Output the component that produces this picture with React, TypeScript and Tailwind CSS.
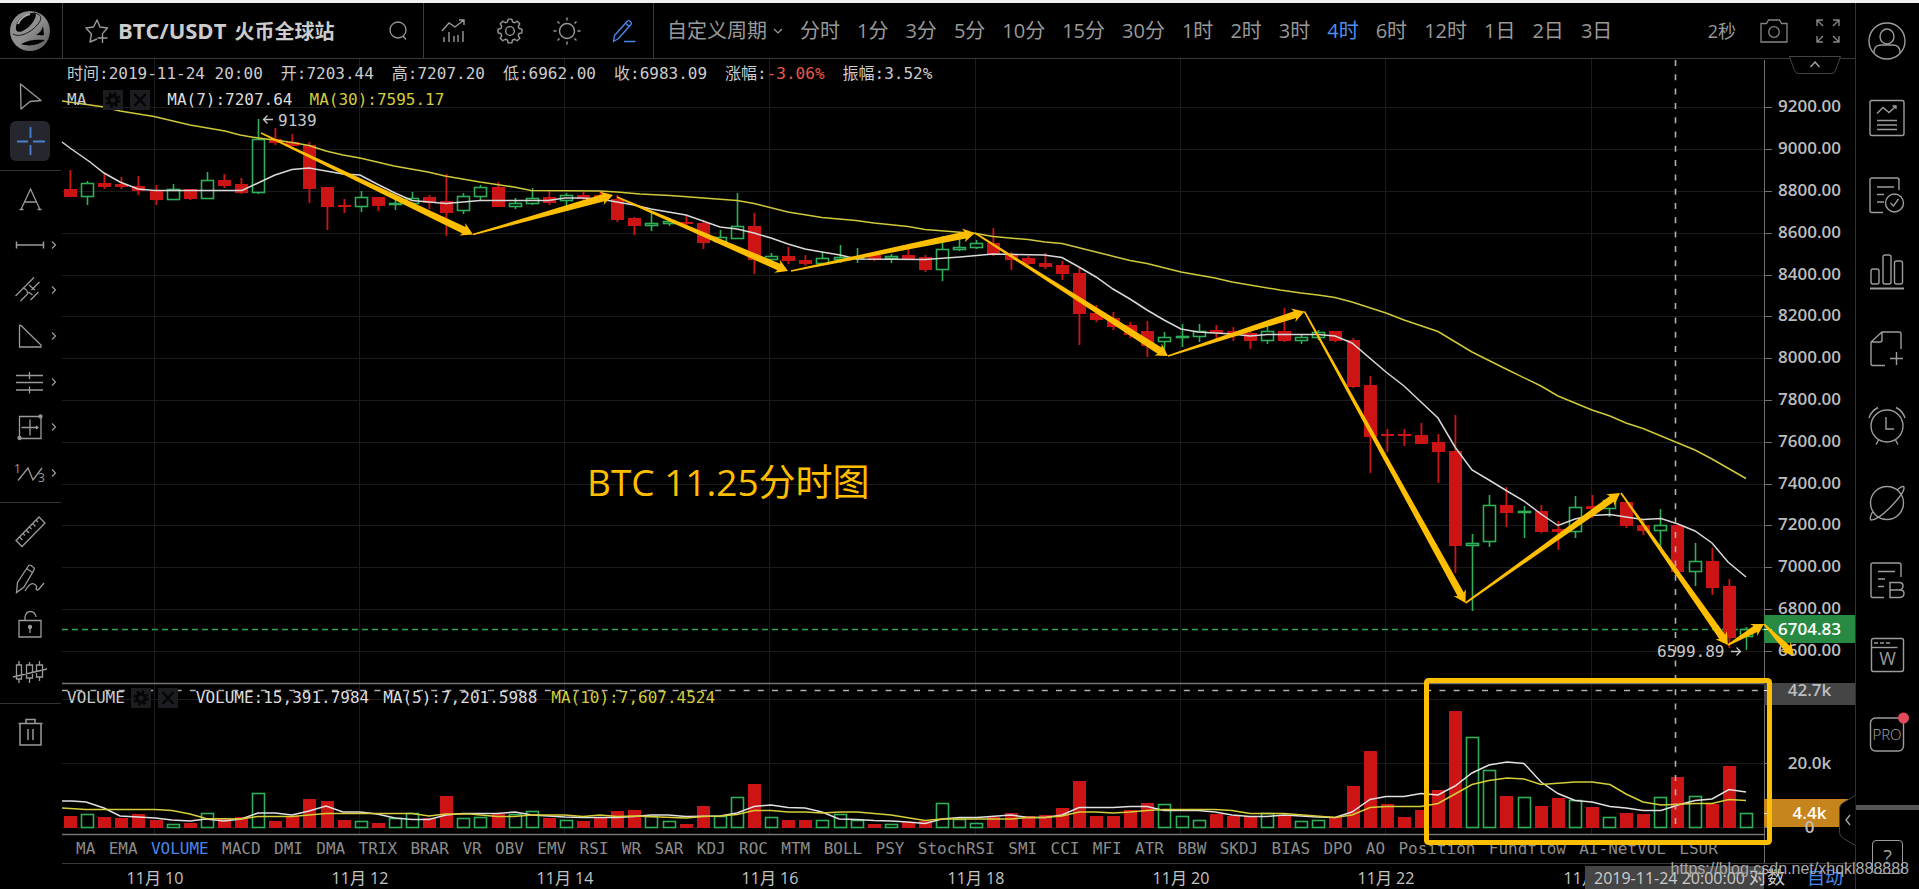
import type { ReactNode } from 'react'

const SANS = "font-['Open_Sans','Noto_Sans_CJK_SC',sans-serif]"
const MONO = "font-['DejaVu_Sans_Mono','Noto_Sans_CJK_SC',monospace]"

/* Plot geometry: first candle centre, spacing between candles, foot of the volume bars. */
const FIRST_X = 70
const STEP = 17.1
const VOLUME_BASE = 828

type Candle = [string, number, number, number, number, number]

/* direction, body top, body bottom, wick top, wick bottom, volume top */
const candles: Candle[] = [
  ['r', 189, 197, 170, 197, 816], ['g', 183, 197, 181, 205, 814], ['r', 183, 187, 174, 189, 817],
  ['r', 184, 187, 177, 189, 818], ['r', 186, 191, 176, 195, 814], ['r', 191, 200, 185, 205, 820],
  ['g', 189, 200, 184, 200, 824], ['r', 189, 199, 189, 200, 823], ['g', 180, 199, 172, 199, 813],
  ['r', 180, 186, 174, 188, 819], ['r', 184, 193, 178, 194, 817], ['g', 139, 193, 119, 194, 793],
  ['r', 139, 143, 128, 145, 821], ['r', 142, 146, 134, 146, 816], ['r', 145, 189, 142, 203, 799],
  ['r', 187, 207, 187, 230, 801], ['r', 205, 207, 199, 213, 820], ['g', 197, 207, 191, 212, 821],
  ['r', 197, 206, 197, 211, 823], ['g', 203, 205, 198, 210, 818], ['g', 198, 204, 192, 205, 813],
  ['r', 197, 203, 195, 209, 818], ['r', 201, 213, 174, 236, 796], ['g', 196, 211, 193, 214, 818],
  ['g', 187, 197, 185, 201, 817], ['r', 187, 207, 182, 207, 814], ['g', 203, 207, 198, 209, 814],
  ['g', 198, 204, 188, 205, 811], ['r', 197, 203, 191, 205, 818], ['g', 195, 201, 193, 206, 820],
  ['r', 195, 199, 192, 200, 821], ['r', 195, 200, 191, 201, 817], ['r', 199, 220, 195, 222, 811],
  ['r', 218, 226, 217, 235, 810], ['g', 223, 226, 211, 231, 816], ['g', 221, 224, 219, 226, 821],
  ['r', 222, 224, 215, 225, 824], ['r', 223, 243, 220, 249, 806], ['g', 237, 242, 230, 243, 816],
  ['g', 226, 239, 193, 239, 797], ['r', 226, 260, 213, 274, 784], ['g', 256, 260, 253, 262, 817],
  ['r', 256, 261, 247, 264, 820], ['r', 260, 264, 255, 266, 820], ['g', 258, 264, 252, 265, 820],
  ['g', 257, 260, 245, 263, 814], ['g', 257, 259, 248, 263, 820], ['r', 255, 260, 253, 261, 824],
  ['g', 256, 259, 254, 263, 824], ['r', 255, 259, 248, 260, 822], ['r', 257, 270, 255, 272, 821],
  ['g', 249, 270, 236, 281, 803], ['g', 247, 250, 238, 251, 819], ['g', 243, 248, 240, 249, 823],
  ['r', 243, 254, 228, 256, 817], ['r', 254, 260, 252, 270, 813], ['r', 258, 264, 256, 265, 816],
  ['r', 263, 267, 253, 269, 815], ['r', 265, 274, 261, 280, 808], ['r', 273, 314, 268, 345, 781],
  ['r', 313, 320, 305, 322, 816], ['r', 318, 327, 312, 330, 816], ['r', 325, 335, 322, 338, 810],
  ['r', 331, 346, 321, 357, 803], ['g', 337, 342, 332, 355, 804], ['g', 336, 338, 324, 347, 816],
  ['g', 331, 337, 324, 342, 820], ['r', 330, 333, 325, 339, 814], ['r', 331, 334, 327, 341, 816],
  ['r', 333, 341, 329, 349, 816], ['g', 331, 341, 323, 344, 813], ['r', 331, 341, 308, 342, 815],
  ['g', 337, 341, 334, 344, 821], ['g', 332, 338, 330, 340, 820], ['r', 331, 341, 331, 342, 817],
  ['r', 340, 387, 338, 388, 786], ['r', 385, 437, 376, 473, 751], ['r', 434, 436, 429, 452, 804],
  ['r', 434, 436, 429, 446, 817], ['r', 435, 444, 423, 444, 810], ['r', 442, 452, 434, 483, 790],
  ['r', 451, 546, 415, 573, 711], ['g', 543, 546, 534, 611, 737], ['g', 505, 542, 495, 547, 770],
  ['r', 505, 513, 487, 527, 796], ['g', 511, 513, 506, 538, 797], ['r', 511, 532, 505, 533, 806],
  ['r', 529, 532, 521, 550, 798], ['g', 507, 532, 496, 538, 800], ['r', 506, 509, 495, 518, 807],
  ['g', 500, 509, 497, 517, 817], ['r', 502, 526, 502, 528, 813], ['r', 525, 531, 520, 535, 814],
  ['g', 525, 531, 509, 547, 797], ['r', 525, 572, 525, 575, 777], ['g', 561, 572, 543, 586, 796],
  ['r', 561, 588, 548, 595, 804], ['r', 586, 638, 579, 648, 766], ['g', 629, 637, 627, 650, 813],
]

const MA7 =
  '62,142 70,148 90,162 104,173 120,182 138,189 155,190.5 242,190.5 258,183 275,175 292,169.5 309,168 326,171 343,174 360,175 377,184 395,193 412,200.5 429,202 446,203.5 463,202 480,200.5 548,200.5 565,198 582,198 600,199 617,202 634,205 651,209 686,215 703,221 720,227 737,229 754,233 771,238 788,244 805,249 822,252 840,255 857,259 925,259.5 960,257 993,254 1044,255 1062,257.5 1079,267 1096,277 1113,289 1130,299 1147,310 1164,320 1181,329 1198,332 1232,334 1250,336 1267,334.5 1318,334.5 1335,336 1352,343 1386,372 1404,386 1421,402 1438,418 1455,447 1472,470 1489,480 1507,491 1524,501 1541,514 1558,525.5 1575,519 1592,515.5 1610,514.5 1626,517 1643,519.5 1661,518.5 1678,524 1695,531 1712,543 1728,562 1746,577'
const MA30 =
  '62,101 104,107 120,111 154,116.5 190,125 225,131 240,135 258,138 275,140 292,142.5 309,145.5 326,151 343,155 360,158 394,166 428,172 445,176 480,182 514,187 531,190.5 600,191 617,192 640,194 670,195.5 737,200.5 754,203.5 788,212 822,217.5 856,220.5 874,223 908,226.5 925,229.5 976,233.5 993,236.5 1028,239.5 1045,242 1062,243.5 1096,252 1130,260.5 1147,263.5 1181,272 1215,278 1232,282 1280,290 1301,293 1318,295 1335,297.5 1352,302 1386,313 1404,320 1438,331.5 1472,352 1506,369 1541,386 1558,396 1592,410 1610,416 1626,423 1643,428.5 1678,443 1695,450 1712,459 1746,478.5'
const VOL_MA5 =
  '62,801 72,801 86,802 104,808 120,816 138,817 155,818 172,820 190,821 206,819 224,821 241,819 258,813 275,813 292,815 309,811 326,806 343,812 360,812 377,814 395,818 412,819.5 429,819.5 446,815 463,813.5 497,813.5 515,812 532,815 565,817 583,817.5 617,817.5 634,816.5 651,815 668,815 686,816.5 720,816 737,813 754,806.5 771,805 788,807.5 805,808 822,812 839,819 856,819.5 874,820.5 891,821 908,822 925,823.5 942,819 960,817.5 977,817.5 1011,815 1028,817.5 1045,817.5 1062,815 1079,807.5 1113,807.5 1130,806.5 1147,806.5 1164,810.5 1198,810.5 1215,812 1232,815 1250,816.5 1267,816.5 1284,815 1301,816 1318,817 1335,817.5 1352,812 1370,799.5 1386,796.5 1404,796.5 1421,793.5 1438,795 1455,786 1472,773 1489,765 1507,762 1524,763.5 1541,782 1558,793.5 1575,800.5 1592,802 1610,806.5 1626,808 1643,810.5 1661,810.5 1678,805 1695,800.5 1712,799 1729,789.5 1746,792'
const VOL_MA10 =
  '62,808 86,809.5 155,809.5 172,810.5 190,814 206,818.5 241,819 258,816.5 292,816.5 309,815 326,813.5 412,813.5 429,816 446,814 470,814 497,816.5 514,816.5 531,815 565,815 583,816.5 600,815 617,816.5 634,816 686,818 703,816.5 720,816 737,814.5 754,810.5 771,810.5 788,812 805,812 822,813 840,812 857,812 891,815 925,820.5 942,819 1011,819 1028,817.5 1045,817.5 1062,816 1079,812 1096,812 1113,813 1130,812 1147,810.5 1164,809.5 1215,809.5 1232,810.5 1250,813.5 1284,813.5 1335,817.5 1352,815 1370,807.5 1386,806.5 1421,806.5 1438,803.5 1455,794 1472,784.5 1489,780.5 1507,778 1524,779 1541,784.5 1575,782 1592,782 1610,784.5 1626,794 1643,802 1661,805 1695,803.5 1712,803.5 1729,799.5 1746,800.5'

const priceTicks: [string, number][] = [
  ['9200.00', 107], ['9000.00', 149], ['8800.00', 191], ['8600.00', 233], ['8400.00', 275],
  ['8200.00', 316], ['8000.00', 358], ['7800.00', 400], ['7600.00', 442], ['7400.00', 484],
  ['7200.00', 525], ['7000.00', 567], ['6800.00', 609], ['6600.00', 651],
]

const dayTicks: [string, number][] = [
  ['11月 10', 154], ['11月 12', 359], ['11月 14', 564], ['11月 16', 769],
  ['11月 18', 975], ['11月 20', 1180], ['11月 22', 1385], ['11月 24', 1591],
]

const arrows: [number, number, number, number][] = [
  [261, 133, 473, 234.5], [473, 234.5, 613, 195], [617, 197, 788, 271], [791, 271, 975, 233],
  [975, 233, 1168, 356], [1168, 356, 1304.5, 311.5], [1304.5, 311.5, 1465.5, 603],
  [1465.5, 603, 1620, 493], [1621, 493, 1728, 645], [1728, 645, 1764, 624], [1764, 624, 1794, 655.5],
]

function taperedArrow([x1, y1, x2, y2]: [number, number, number, number]) {
  const length = Math.hypot(x2 - x1, y2 - y1)
  const ux = (x2 - x1) / length
  const uy = (y2 - y1) / length
  const at = (along: number, across: number) =>
    `${(x1 + ux * along - uy * across).toFixed(1)},${(y1 + uy * along + ux * across).toFixed(1)}`
  const neck = length - 10
  return [
    at(0, -0.8), at(neck, -3.6), at(neck - 2, -7), at(length, 0),
    at(neck - 2, 7), at(neck, 3.6), at(0, 0.8),
  ].join(' ')
}

function CandleShape({ candle, index }: { candle: Candle; index: number }) {
  const [dir, top, bottom, high, low, vol] = candle
  const x = Math.round(FIRST_X + STEP * index)
  const left = x - 6
  if (dir === 'r') {
    return (
      <g fill="#cc1414">
        <rect x={x - 0.5} y={high} width="1.8" height={low - high} />
        <rect x={left} y={top} width="13" height={bottom - top} />
        <rect x={left} y={vol} width="13" height={VOLUME_BASE - vol} />
      </g>
    )
  }
  return (
    <g fill="none" stroke="#2fb058" strokeWidth="1.6">
      <path d={`M${x + 0.5} ${high}V${top}M${x + 0.5} ${bottom}V${low}`} />
      <rect x={left + 0.5} y={top + 0.5} width="12" height={bottom - top - 1} />
      <rect x={left + 0.5} y={vol + 0.5} width="12" height={VOLUME_BASE - vol - 1} />
    </g>
  )
}

function Plot() {
  return (
    <svg viewBox="62 59 1793 776" className={`block w-full overflow-visible ${SANS}`}>
      <g stroke="#1b1b1b">
        {priceTicks.map(([label, y]) => (
          <line key={label} x1="62" x2="1764" y1={y + 0.5} y2={y + 0.5} />
        ))}
        {dayTicks.map(([label, x]) => (
          <line key={label} x1={x + 0.5} x2={x + 0.5} y1="59" y2="834" />
        ))}
        <path d="M62 699.5H1764M62 763.5H1764M62 827.5H1764" />
      </g>
      <line x1="62" x2="1764" y1="629.5" y2="629.5" stroke="#2fa553" strokeWidth="1.4" strokeDasharray="6 4" />
      {candles.map((candle, i) => (
        <CandleShape key={i} candle={candle} index={i} />
      ))}
      <g fill="none" strokeWidth="1.5">
        <polyline points={MA7} stroke="#d8d8d8" />
        <polyline points={MA30} stroke="#cfc93a" />
        <polyline points={VOL_MA5} stroke="#e0e0e0" />
        <polyline points={VOL_MA10} stroke="#d6cd3a" />
      </g>
      <g stroke="#b0b0b0" strokeWidth="1.6">
        <line x1="1675.5" x2="1675.5" y1="60" y2="830" strokeDasharray="6 8.3" />
        <line x1="62" x2="1764" y1="690.5" y2="690.5" strokeDasharray="6 8.2" />
      </g>
      <path d="M62 683.5H1764M62 834.5H1764" stroke="#757575" strokeWidth="1.5" />
      <path d="M1764.5 60V835" stroke="#707070" />

      <g fontSize="16" fill="#c8c8c8" stroke="none" className={MONO}>
        <path d="M264 119.5h9M267.500 115.500l-4 4 4 4M1731 651.500h9M1736.500 647.500l4 4-4 4" fill="none" stroke="#c8c8c8" strokeWidth="1.3" />
        <text x="278" y="126">9139</text>
        <text x="1657" y="657">6599.89</text>
      </g>

      <g stroke="#707070">
        {priceTicks.map(([label, y]) => (
          <line key={label} x1="1764" x2="1772" y1={y + 0.5} y2={y + 0.5} />
        ))}
        <path d="M1764 763.5h8M1764 827.5h8" />
      </g>
      <rect x="1764" y="615" width="91" height="28" fill="#288a42" />
      <rect x="1764" y="683" width="91" height="22" fill="#454545" />
      <rect x="1764" y="799" width="91" height="28" fill="#c6851c" />
      <path d="M1764 629.500h8M1764 690.500h8M1764 813.500h8" stroke="#eee" />
      <g fontSize="17" fontWeight="600" fill="#bdbdbd" textAnchor="middle">
        {priceTicks.map(([label, y]) => (
          <text key={label} x="1809.500" y={y + 5}>{label}</text>
        ))}
        <text x="1809.500" y="696">42.7k</text>
        <text x="1809.500" y="769">20.0k</text>
        <text x="1809.500" y="833">0</text>
        <g fill="#fff">
          <text x="1809.500" y="635">6704.83</text>
          <text x="1809.500" y="819">4.4k</text>
        </g>
      </g>

      <g fill="#ffbe00">
        {arrows.map((arrow, i) => (
          <polygon key={i} points={taperedArrow(arrow)} />
        ))}
        <text x="587" y="496" fontSize="37">BTC 11.25分时图</text>
      </g>
      <rect x="1426.500" y="680.500" width="343" height="162" rx="2" fill="none" stroke="#ffbe00" strokeWidth="5" />
      <path d="M1855.500 795.500l-12 7q-4 2-4 6v24q0 4 4 6l12 7" fill="#000" stroke="#444" />
      <path d="M1850 815l-4 5 4 5" fill="none" stroke="#aaa" strokeWidth="1.3" />
    </svg>
  )
}

function LegendButtons() {
  return (
    <span className="flex gap-[7px]">
      <button aria-label="Settings" className="flex size-5 items-center justify-center bg-[#1c1d20]">
        <svg viewBox="0 0 16 16" className="size-4" fill="none" stroke="#050505">
          <circle cx="8" cy="8" r="4" strokeWidth="3" />
          <circle cx="8" cy="8" r="6.500" strokeWidth="2.500" strokeDasharray="2.600 2.500" />
        </svg>
      </button>
      <button aria-label="Close" className="flex size-5 items-center justify-center bg-[#1c1d20]">
        <svg viewBox="0 0 16 16" className="size-4" stroke="#050505" strokeWidth="2.500">
          <path d="M2.500 2l11 12M13.500 2l-11 12" />
        </svg>
      </button>
    </span>
  )
}

function Tool({ label, more, active, children }: { label: string; more?: boolean; active?: boolean; children: ReactNode }) {
  return (
    <button aria-label={label} className="flex w-full flex-1 items-center pl-[10px]">
      <svg
        viewBox="0 0 40 40"
        className={active ? 'size-10 rounded-md bg-[#26262e]' : 'size-10'}
        fill="none"
        stroke={active ? '#4a80d0' : '#9a9a9a'}
        strokeWidth="1.300"
      >
        {children}
      </svg>
      {more && (
        <svg viewBox="0 0 6 10" className="ml-px h-[10px] w-[6px]" fill="none" stroke="#9a9a9a" strokeWidth="1.200">
          <path d="M1 1.500L4.500 5 1 8.500" />
        </svg>
      )}
    </button>
  )
}

function LeftToolbar() {
  return (
    <aside className="flex w-[62px] shrink-0 flex-col pr-px">
      <div className="flex h-[112px] flex-col border-b border-[#333] pt-[14px] pb-[6px]">
        <Tool label="Cursor"><path d="M10.500 8L31 24.500 20 25.500 11 33z" strokeLinejoin="round" /></Tool>
        <Tool label="Crosshair" active><path d="M20.500 6v11M20.500 24v10M7 20.500h11M23 20.500h12" strokeWidth="1.800" /></Tool>
      </div>
      <div className="flex h-[332px] flex-col border-b border-[#333] pt-[5px] pb-[6px]">
        <Tool label="Text"><path d="M11 30.500L20.500 10 30 30.500M14 23h13M9.500 30.500h4M27.500 30.500h4" /></Tool>
        <Tool label="Line" more><path d="M6.500 16.500v7M33.500 16.500v7M6.500 20h27" strokeWidth="1.500" /></Tool>
        <Tool label="Channel" more>
          <path d="M5.500 26L24 7.500M10.500 31l7-7M21.500 20l8-8M20.500 30l8-8M13 17.500l4 3M18.500 22l4 3M17 21l1 3M19 15l6 5" />
        </Tool>
        <Tool label="Shape" more><path d="M9.500 9.500v21.500h21.500v-2L11 9.500z" /></Tool>
        <Tool label="Fibonacci" more><path d="M6 13.500h27M6 20.500h27M6 28h27M19.500 10v7M19.500 24.500v7" /></Tool>
        <Tool label="Range" more>
          <path d="M9.500 9.500h21.500v22h-21.500zM20 12.500v16M11.500 20.500h16M26 19l2 1.500-2 1.500" />
          <circle cx="30.500" cy="9.500" r="1.500" />
          <circle cx="9.500" cy="31" r="1.500" />
        </Tool>
        <Tool label="Wave" more>
          <path d="M8 27.500L18 15l5 12L32 15" />
          <g fill="#9a9a9a" stroke="none" fontSize="12" className={SANS}>
            <text x="4" y="20">1</text>
            <text x="28" y="29">3</text>
          </g>
        </Tool>
      </div>
      <div className="flex h-[201px] flex-col border-b border-[#333] pt-[5px] pb-[6px]">
        <Tool label="Ruler">
          <path d="M6 28.500L29 5l6 6L12 34.500zM9.500 25l3 3M13 21.500l2 2M16 18l3 3M19.500 15l2 2M22.500 11.500l3 3M26 8l2 2" />
        </Tool>
        <Tool label="Pencil">
          <path d="M6.500 33.500l1-10L18 7.500q1-2 3-1l2 1.500q2 1 1 3L14 28zM16.500 9.500l6 4M15 32q5-9 9-7t2 5q1 2 3 0l5-6" />
        </Tool>
        <Tool label="Lock">
          <path d="M9 14.500h22V31H9zM15 14v-3q1-5.500 5.500-5.500T26 11" />
          <circle cx="20" cy="21" r="1.500" fill="#9a9a9a" />
          <path d="M20 21v6" />
        </Tool>
        <Tool label="Hide drawings">
          <path d="M6.500 12h5v14h-5zM16.500 12h6v13h-6zM26.500 12h6v12h-6zM9 8v4M9 26v4M19.500 9v3M19.500 25v5M29.500 8v4M29.500 24v4M3 24l34-8" />
        </Tool>
      </div>
      <div className="flex h-[56px] flex-col">
        <Tool label="Delete"><path d="M10 11.500h21V33H10zM8.500 11.500h24M16 11V7.500h9V11M18 17v11M23 17v11" strokeWidth="1.500" /></Tool>
      </div>
    </aside>
  )
}

function SideItem({ label, children }: { label: string; children: ReactNode }) {
  return (
    <button aria-label={label} className="flex h-[77px] w-full items-center justify-center pr-[2px] pb-[2px]">
      <svg viewBox="0 0 40 40" className="size-10 overflow-visible" fill="none" stroke="#9c9c9c" strokeWidth="1.400">
        {children}
      </svg>
    </button>
  )
}

function RightSidebar() {
  return (
    <aside className="flex w-16 shrink-0 flex-col overflow-hidden border-l border-[#333]">
      <SideItem label="Account">
        <circle cx="20" cy="20" r="18" />
        <ellipse cx="20" cy="15.500" rx="7" ry="7.500" />
        <path d="M7 32v-2q1-6 7-6h12q6 0 7 6v2" />
      </SideItem>
      <SideItem label="Market report">
        <rect x="3" y="2.500" width="34" height="35" rx="2" />
        <path d="M10 15.500l6-6 6 5 7-6.500M25.500 8H29v3M10 22.500h20M10 27h20M10 31.500h20" />
      </SideItem>
      <SideItem label="Orders">
        <path d="M16 37.500H5q-2 0-2-2V5q0-2 2-2h25q2 0 2 2v10M10 12h17M10 19.500h7M10 27h7" />
        <circle cx="27.500" cy="28" r="9" />
        <path d="M23.500 28l3 3 5-7" />
      </SideItem>
      <SideItem label="Statistics">
        <rect x="4" y="17" width="8" height="15" rx="2" />
        <rect x="16" y="3" width="8" height="29" rx="2" />
        <rect x="27.500" y="9" width="8" height="23" rx="2" />
        <path d="M3 36.500h34" strokeWidth="1.800" />
      </SideItem>
      <SideItem label="New note">
        <path d="M18 36.500H6q-2 0-2-2V13L15 3h17q2 0 2 2v15M4 13h9q2 0 2-2V3M29.500 23v13M23 29.500h13" />
      </SideItem>
      <SideItem label="Alerts">
        <circle cx="20" cy="20" r="16" />
        <path d="M19 11v12h8M2 12q2-7 9-10.500M38 12q-2-7-9-10.500M11.500 34L9 38.500M28.500 34l2.500 4.500" />
      </SideItem>
      <SideItem label="Discover">
        <circle cx="20" cy="20" r="16.500" />
        <path d="M30 7q7-6 7-2 0 5-13 18.500T4 37q-2-1 1.500-8" />
      </SideItem>
      <SideItem label="Backtest">
        <path d="M17 37.500H6q-2 0-2-2V5q0-2 2-2h26q2 0 2 2v12M11 11.500h17M11 19h7M11 26.500h6M23 22.500h9q4 0 4 3.500t-4 4h-9zM23 30h10q4 0 4 3.500t-4 4H23z" />
      </SideItem>
      <SideItem label="Workspace">
        <rect x="4.500" y="1.500" width="32" height="33" rx="2" />
        <path d="M4.500 10.500h26" />
        <path d="M7 6h16" strokeDasharray="4 2" />
        <text x="20.500" y="28" textAnchor="middle" fontSize="18" fill="#9c9c9c" stroke="none" className={SANS}>W</text>
      </SideItem>
      <SideItem label="Pro">
        <rect x="3.500" y="4" width="33" height="33" rx="5" />
        <text x="20" y="26" textAnchor="middle" fontSize="15" fontWeight="300" fill="#a8a8a8" stroke="none" className={SANS}>PRO</text>
        <circle cx="36.500" cy="4" r="5.500" fill="#e04a5a" stroke="none" />
      </SideItem>
      <div className="mt-8 h-[5px] shrink-0 bg-[#555]" />
      <button aria-label="Help" className="mx-auto mt-[30px] h-[34px] w-[31px] rounded-sm border border-[#9c9c9c] text-xl text-[#9c9c9c]">
        ?
      </button>
    </aside>
  )
}

const periods = ['分时', '1分', '3分', '5分', '10分', '15分', '30分', '1时', '2时', '3时', '4时', '6时', '12时', '1日', '2日', '3日']

const iconButton = 'flex flex-1 items-center justify-center'

function Header() {
  return (
    <header className="flex h-14 border-b border-[#3a3a3a] text-[#999]">
      <a href="#home" aria-label="Home" className="flex w-[62px] shrink-0 items-center justify-center pr-[2px]">
        <svg viewBox="0 0 40 42" className="h-[42px] w-10">
          <defs>
            <linearGradient id="sphere" x1="0" y1="0" x2="1" y2="1">
              <stop offset="0" stopColor="#8a8a8a" />
              <stop offset="0.500" stopColor="#8f8f8f" />
              <stop offset="1" stopColor="#565656" />
            </linearGradient>
          </defs>
          <circle cx="20" cy="21" r="20" fill="url(#sphere)" />
          <path d="M6 20C5 12 12 4 22 3c5-1 5 3 1 9C18 19 9 25 6 20z" fill="#050505" />
          <path d="M24 3c7 1 9 5 4 11C21 23 9 28 3 24" fill="none" stroke="#1a1a1a" strokeWidth="1" />
          <path d="M8 14c2-5 7-9 12-10" fill="none" stroke="#aaa" strokeWidth="2" />
          <path d="M33 16l1 9c-3 1-5 0-8 0 4-2 6-5 7-9zM11 34c7-4 15-5 24-4-6 5-16 7-24 4z" fill="#000" />
        </svg>
      </a>
      <div className="flex w-[361px] shrink-0 items-center border-l border-[#3a3a3a] pr-4 pl-[21px]">
        <button aria-label="Favourite">
          <svg viewBox="0 0 26 26" className="size-[26px]" fill="none" stroke="#9a9a9a" strokeWidth="1.400" strokeLinejoin="round">
            <path d="M13 21l-7 3 1.500-8L2 10l7.500-1L13 2l3 7 7.500 1-4.500 5M18.500 15v10M13.500 20h10" />
          </svg>
        </button>
        <h1 className="ml-2 flex items-baseline gap-2 text-xl font-bold whitespace-nowrap text-[#ccc]">
          <span className="text-[22px]">BTC/USDT</span>
          <span>火币全球站</span>
        </h1>
        <button aria-label="Search" className="ml-auto">
          <svg viewBox="0 0 18 20" className="h-5 w-[18px]" fill="none" stroke="#9a9a9a" strokeWidth="1.300">
            <circle cx="9" cy="9" r="8" />
            <path d="M14 15l3 3.500" />
          </svg>
        </button>
      </div>
      <div className="flex w-[230px] shrink-0 border-l border-[#3a3a3a]">
        <button aria-label="Indicators" className={iconButton}>
          <svg viewBox="0 0 26 24" className="h-6 w-[26px]" fill="none" stroke="#9a9a9a" strokeWidth="1.400">
            <path d="M2 12l7-8 6 4 9-7M19 1h5v5M4 18v5M9 13v10M14 17v6M18 16v7M23 12v11" />
          </svg>
        </button>
        <button aria-label="Settings" className={iconButton}>
          <svg viewBox="0 0 24 24" className="size-[26px]" fill="none" stroke="#9a9a9a" strokeWidth="1.300" strokeLinejoin="round">
            <path d="M10.300 1h3.400l.6 2.600 2 .8L18.600 3 21 5.400l-1.400 2.300.8 2 2.600.6v3.400l-2.600.6-.8 2 1.400 2.300-2.400 2.400-2.300-1.400-2 .8-.6 2.600h-3.400l-.6-2.600-2-.8L5.400 21 3 18.600l1.400-2.300-.8-2L1 13.700v-3.400l2.600-.6.8-2L3 5.400 5.400 3l2.300 1.400 2-.8z" />
            <circle cx="12" cy="12" r="4" />
          </svg>
        </button>
        <button aria-label="Theme" className={iconButton}>
          <svg viewBox="0 0 28 28" className="size-7" fill="none" stroke="#9a9a9a" strokeWidth="1.400">
            <circle cx="14" cy="14" r="7.500" />
            <path d="M14 0.500v3M14 24.500v3M0.500 14h3M24.500 14h3M4.500 4.500l2 2M21.500 21.500l2 2M4.500 23.500l2-2M21.500 6.500l2-2" />
          </svg>
        </button>
        <button aria-label="Draw" className={iconButton}>
          <svg viewBox="0 0 24 24" className="size-6" fill="none" stroke="#4a86e8" strokeWidth="1.400" strokeLinejoin="round">
            <path d="M1.500 22.500l1-6L15.500 2q1.500-1 3 .5t.5 3L6.500 19.500zM12 22.500h11.500M13.500 4l4 4" />
          </svg>
        </button>
      </div>
      <div className="flex min-w-0 flex-1 items-center border-l border-[#3a3a3a] pr-[15px] pl-[13px]">
        <nav className="flex items-center gap-[17px] text-xl whitespace-nowrap">
          <button className="flex items-center gap-[6px]">
            自定义周期
            <svg viewBox="0 0 10 8" className="h-2 w-[10px]" fill="none" stroke="#999" strokeWidth="1.200">
              <path d="M1 2l4 4 4-4" />
            </svg>
          </button>
          {periods.map((period) => (
            <button key={period} className={period === '4时' ? 'text-[#4f8ff0]' : ''}>{period}</button>
          ))}
        </nav>
        <span className="ml-auto text-lg whitespace-nowrap">2秒</span>
        <button aria-label="Screenshot" className="ml-6">
          <svg viewBox="0 0 28 24" className="h-6 w-7" fill="none" stroke="#858585" strokeWidth="1.300">
            <path d="M1 23V4.500h5.500l2-3.500h11l2 3.500H27V23z" />
            <circle cx="14" cy="13" r="5.300" />
          </svg>
        </button>
        <button aria-label="Full screen" className="ml-7">
          <svg viewBox="0 0 24 24" className="size-6" fill="none" stroke="#858585" strokeWidth="1.400">
            <path d="M1 7V1h6M1 1l6 6M17 1h6v6M23 1l-6 6M1 17v6h6M1 23l6-6M17 23h6v-6M23 23l-6-6" />
          </svg>
        </button>
      </div>
    </header>
  )
}

const indicators = [
  'MA', 'EMA', 'VOLUME', 'MACD', 'DMI', 'DMA', 'TRIX', 'BRAR', 'VR', 'OBV', 'EMV', 'RSI', 'WR', 'SAR', 'KDJ', 'ROC', 'MTM',
  'BOLL', 'PSY', 'StochRSI', 'SMI', 'CCI', 'MFI', 'ATR', 'BBW', 'SKDJ', 'BIAS', 'DPO', 'AO', 'Position', 'Fundflow', 'AI-NetVOL', 'LSUR',
]

function ChartPanel() {
  return (
    <main className="min-w-0 flex-1">
      <div className="relative z-10">
        <Plot />
        <div className={`absolute top-0 left-[5px] text-base leading-[26px] whitespace-nowrap text-[#ccc] ${MONO}`}>
          <div className="flex gap-[18px] pt-[2px]">
            <span>时间:2019-11-24 20:00</span>
            <span>开:7203.44</span>
            <span>高:7207.20</span>
            <span>低:6962.00</span>
            <span>收:6983.09</span>
            <span>涨幅:<span className="text-[#e8584c]">-3.06%</span></span>
            <span>振幅:3.52%</span>
          </div>
          <div className="flex items-center gap-[17px]">
            <span>MA</span>
            <LegendButtons />
            <span className="text-[#ddd]">MA(7):7207.64</span>
            <span className="text-[#d4cc3a]">MA(30):7595.17</span>
          </div>
        </div>
        <div className={`absolute top-[627px] left-[5px] flex items-center text-base whitespace-nowrap text-[#ccc] ${MONO}`}>
          <span className="mr-[6px]">VOLUME</span>
          <LegendButtons />
          <span className="ml-[18px] text-[#ddd]">VOLUME:15,391.7984</span>
          <span className="ml-[14px] text-[#ddd]">MA(5):7,201.5988</span>
          <span className="ml-[14px] text-[#d4cc3a]">MA(10):7,607.4524</span>
        </div>
        <button aria-label="Collapse toolbar" className="absolute -top-[3px] right-[14px]">
          <svg viewBox="0 0 52 18" className="h-[18px] w-[52px]" stroke="#444">
            <path d="M0.500 0.500h51l-5 14q-1 3-4 3h-33q-3 0-4-3z" fill="#000" />
            <path d="M21.500 11l4.500-5 4.500 5" fill="none" stroke="#aaa" strokeWidth="1.300" />
          </svg>
        </button>
      </div>
      <div className="flex h-[29px] border-b border-[#3a3a3a]">
        <nav className={`flex flex-1 items-center justify-between border-r border-[#707070] pr-[46px] pl-[14px] text-base whitespace-nowrap text-[#8c8c8c] ${MONO}`}>
          {indicators.map((name) => (
            <button key={name} className={name === 'VOLUME' ? 'text-[#4a86e8]' : ''}>{name}</button>
          ))}
        </nav>
        <div className="w-[90px] shrink-0" />
      </div>
      <div className="relative">
        <svg viewBox="62 864 1793 25" className={`block w-full ${SANS}`}>
          <g fontSize="16" fill="#c4c4c4" textAnchor="middle">
            {dayTicks.map(([label, x]) => (
              <text key={label} x={x + 1} y="884">{label}</text>
            ))}
          </g>
          <rect x="1585" y="866" width="179" height="23" fill="#454545" />
          <text x="1594" y="884" fontSize="16" fill="#ccc">2019-11-24 20:00:00</text>
        </svg>
        <div className="absolute right-3 bottom-0 flex gap-[22px] text-lg leading-[24px]">
          <button className="text-[#ccc]">对数</button>
          <button className="text-[#4a86e8]">自动</button>
        </div>
      </div>
    </main>
  )
}

export default function App() {
  return (
    <div className={`relative min-h-screen overflow-hidden bg-black ${SANS}`}>
      <div className="h-[3px] bg-[#f0f0f0]" />
      <div className="flex">
        <div className="min-w-0 flex-1">
          <Header />
          <div className="flex">
            <LeftToolbar />
            <ChartPanel />
          </div>
        </div>
        <RightSidebar />
      </div>
      <p className="absolute right-[10px] bottom-[10px] z-20 font-['Liberation_Sans',sans-serif] text-base leading-5 text-[#aaa]">
        https://blog.csdn.net/xhqkl888888
      </p>
    </div>
  )
}
